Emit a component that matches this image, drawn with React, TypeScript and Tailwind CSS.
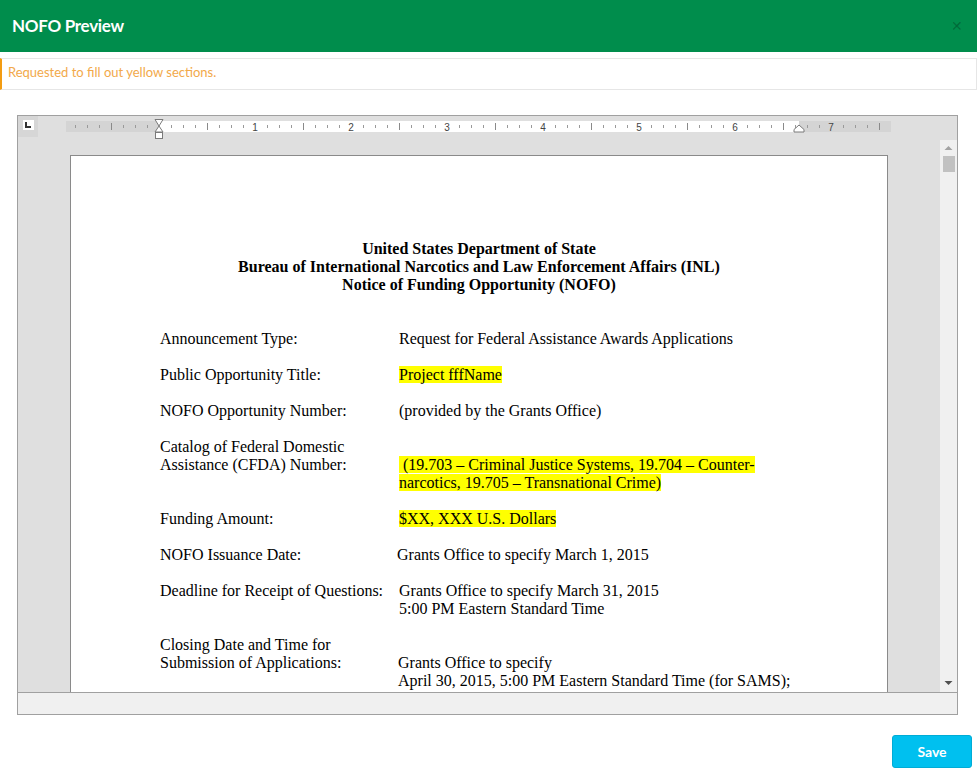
import { ReactNode } from 'react';

const serif = { fontFamily: '"Liberation Serif", "Times New Roman", serif' };

function Hl({ children }: { children: ReactNode }) {
  return <span className="bg-[#ffff00]">{children}</span>;
}

function Ruler() {
  // origin of this svg sits at the 0" mark minus 93px
  const ticks: ReactNode[] = [];
  for (let i = -7; i <= 63; i++) {
    const x = 93 + i * 12;
    if (x < 2 || x > 822) continue;
    if (i % 8 === 0) {
      const n = i / 8;
      if (n > 0) {
        ticks.push(
          <text key={i} x={x} y={14.5} textAnchor="middle" fontSize="10" fill="#444" fontFamily="Liberation Sans, Arial, sans-serif">
            {n}
          </text>
        );
      }
    } else if (i % 4 === 0) {
      ticks.push(<line key={i} x1={x + 0.5} x2={x + 0.5} y1={7} y2={14} stroke="#8a8a8a" />);
    } else {
      ticks.push(<line key={i} x1={x + 0.5} x2={x + 0.5} y1={9} y2={12} stroke="#9a9a9a" />);
    }
  }
  return (
    <svg width="825" height="21" className="overflow-visible">
      <rect x="0" y="5" width="825" height="11" fill="#d4d4d4" />
      <rect x="93" y="5" width="640" height="11" fill="#ffffff" />
      {ticks}
      {/* left indent hourglass */}
      <polygon points="89,3.5 97,3.5 93,10" fill="#fff" stroke="#7a7a7a" />
      <polygon points="93,10 89,16 97,16" fill="#fff" stroke="#7a7a7a" />
      <rect x="89.5" y="16.5" width="7" height="6" fill="#fff" stroke="#7a7a7a" />
      {/* right indent */}
      <polygon points="733,9 738,13.5 738,16 728,16 728,13.5" fill="#fff" stroke="#7a7a7a" />
    </svg>
  );
}

function Row({ label, children, valuePad = 'pl-0' }: { label: ReactNode; children: ReactNode; valuePad?: string }) {
  return (
    <div className="flex mb-[18px]">
      <div className="w-[239px] shrink-0">{label}</div>
      <div className={valuePad}>{children}</div>
    </div>
  );
}

export default function App() {
  return (
    <div className="w-[977px] h-[774px] bg-white overflow-hidden" style={{ fontFamily: 'Lato, "Open Sans", sans-serif' }}>
      {/* header */}
      <div className="h-[52px] bg-[#008d4c] flex items-center justify-between pl-3 pr-[14px]">
        <div className="text-white font-bold text-[17px] tracking-[-0.3px]">NOFO Preview</div>
        <div className="text-black/25 text-[14px] leading-none">✕</div>
      </div>

      {/* alert */}
      <div className="mt-[6px] h-[32px] border border-[#e6e6e6] border-l-2 border-l-[#f39c12] pl-[6px] pt-[4px] text-[13px] text-[#f2a94a]">
        Requested to fill out yellow sections.
      </div>

      {/* editor */}
      <div className="mt-[25px] ml-[17px] w-[941px] h-[600px] border border-[#a0a0a0] bg-[#dfdfdf] flex flex-col">
        <div className="h-[21px] flex shrink-0 relative z-10">
          <div className="w-[20px] h-[21px] bg-[#d6d6d6] flex items-start justify-center pt-[4px]">
            <div className="w-[11px] h-[10px] bg-white flex items-center justify-center">
              <svg width="6" height="6" viewBox="0 0 6 6">
                <path d="M1 0 V5 H6" stroke="#333" strokeWidth="2" fill="none" />
              </svg>
            </div>
          </div>
          <div className="ml-[28px]">
            <Ruler />
          </div>
        </div>

        <div className="flex-1 flex min-h-0">
          <div className="flex-1 overflow-hidden pl-[52px] pt-[18px]">
            <div className="w-[818px] h-[600px] bg-white border border-[#8a8a8a] pl-[89px] pt-[84px] text-[16px] leading-[18px] text-black" style={serif}>
              <div className="font-bold text-center pr-[89px] mb-[36px]">
                <div>United States Department of State</div>
                <div>Bureau of International Narcotics and Law Enforcement Affairs (INL)</div>
                <div>Notice of Funding Opportunity (NOFO)</div>
              </div>

              <Row label="Announcement Type:">Request for Federal Assistance Awards Applications</Row>
              <Row label="Public Opportunity Title:">
                <Hl>Project fffName</Hl>
              </Row>
              <Row label="NOFO Opportunity Number:">(provided by the Grants Office)</Row>
              <Row label={<>Catalog of Federal Domestic<br />Assistance (CFDA) Number:</>}>
                <br />
                <Hl>&nbsp;(19.703 – Criminal Justice Systems, 19.704 – Counter-</Hl>
                <br />
                <Hl>narcotics, 19.705 – Transnational Crime)</Hl>
              </Row>
              <Row label="Funding Amount:">
                <Hl>$XX, XXX U.S. Dollars</Hl>
              </Row>
              <div className="flex mb-[18px]">
                <div className="w-[237px] shrink-0">NOFO Issuance Date:</div>
                <div>Grants Office to specify March 1, 2015</div>
              </div>
              <Row label="Deadline for Receipt of Questions:">
                Grants Office to specify March 31, 2015
                <br />
                5:00 PM Eastern Standard Time
              </Row>
              <div className="flex mb-[18px]">
                <div className="w-[238px] shrink-0">
                  Closing Date and Time for
                  <br />
                  Submission of Applications:
                </div>
                <div>
                  <br />
                  Grants Office to specify
                  <br />
                  April 30, 2015, 5:00 PM Eastern Standard Time (for SAMS);
                </div>
              </div>
            </div>
          </div>

          {/* scrollbar */}
          <div className="w-[17px] mt-[3px] bg-[#f0f0f0] flex flex-col items-center">
            <svg width="9" height="6" className="mt-[5px]">
              <polygon points="4.5,1 8.5,5 0.5,5" fill="#a3a3a3" />
            </svg>
            <div className="w-[12px] h-[16px] bg-[#c1c1c1] mt-[5px]" />
            <div className="flex-1" />
            <svg width="9" height="6" className="mb-[6px]">
              <polygon points="0.5,1 8.5,1 4.5,5" fill="#505050" />
            </svg>
          </div>
        </div>

        <div className="h-[22px] shrink-0 bg-[#f0f0f0] border-t border-[#a0a0a0]" />
      </div>

      {/* footer */}
      <div className="flex justify-end mt-[20px] pr-[5px]">
        <button className="w-[80px] h-[33px] rounded-[3px] bg-[#00c0ef] border border-[#00acd6] text-white text-[14px] font-bold">
          Save
        </button>
      </div>
    </div>
  );
}
